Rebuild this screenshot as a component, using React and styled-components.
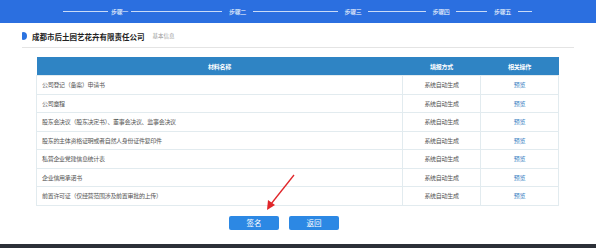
import React from "react";
import styled, { createGlobalStyle } from "styled-components";

const GlobalStyle = createGlobalStyle`
  html, body {
    margin: 0;
    padding: 0;
    background: #fff;
    font-family: "Noto Sans CJK SC", "Noto Sans", sans-serif;
  }
`;

// line widths and the gap boxes holding each label, taken from the mockup
const steps = [
  { line: 45, box: 23, label: "步骤一" },
  { line: 91, box: 31, label: "步骤二" },
  { line: 85, box: 30, label: "步骤三" },
  { line: 58, box: 30, label: "步骤四" },
  { line: 31, box: 31, label: "步骤五" },
];

const rows = [
  "公司登记（备案）申请书",
  "公司章程",
  "股东会决议（股东决定书）、董事会决议、监事会决议",
  "股东的主体资格证明或者自然人身份证件复印件",
  "私营企业党建信息统计表",
  "企业信用承诺书",
  "前置许可证（仅经营范围涉及前置审批的上传）",
];

export default function App() {
  return (
    <>
      <GlobalStyle />
      <Page>
        <StepBar>
          {steps.map((s) => (
            <React.Fragment key={s.label}>
              <Line $w={s.line} />
              <StepLabel $w={s.box}>{s.label}</StepLabel>
            </React.Fragment>
          ))}
          <Line $w={14} />
        </StepBar>

        <TitleRow>
          <Marker />
          <Company>成都市后土园艺花卉有限责任公司</Company>
          <Sub>基本信息</Sub>
        </TitleRow>
        <Divider />

        <Table>
          <thead>
            <tr>
              <Th>材料名称</Th>
              <Th $w={78}>填报方式</Th>
              <Th $w={78}>相关操作</Th>
            </tr>
          </thead>
          <tbody>
            {rows.map((r) => (
              <tr key={r}>
                <Td>{r}</Td>
                <Td $center>系统自动生成</Td>
                <Td $center>
                  <Link>预览</Link>
                </Td>
              </tr>
            ))}
          </tbody>
        </Table>

        <Buttons>
          <Button>签名</Button>
          <Button>返回</Button>
        </Buttons>

        <Footer />

        <Arrow width="40" height="42" viewBox="0 0 40 42">
          <line x1="31" y1="2" x2="8" y2="31" stroke="#e0262a" strokeWidth="1.3" />
          <polygon points="4,37 5,27 12,32" fill="#e0262a" />
        </Arrow>
      </Page>
    </>
  );
}

const Page = styled.div`
  position: relative;
  width: 596px;
  height: 248px;
  overflow: hidden;
  display: flex;
  flex-direction: column;
`;

const StepBar = styled.div`
  height: 23px;
  background: #2b6fe0;
  display: flex;
  align-items: center;
  padding-left: 63px;
`;

const Line = styled.span`
  width: ${(p) => p.$w}px;
  height: 1px;
  background: rgba(255, 255, 255, 0.75);
`;

const StepLabel = styled.span`
  width: ${(p) => p.$w}px;
  color: #fff;
  font-size: 6px;
  line-height: 1;
  letter-spacing: -0.3px;
  text-align: center;
  white-space: nowrap;
`;

const TitleRow = styled.div`
  display: flex;
  align-items: center;
  padding: 7px 0 0 22px;
  height: 12px;
`;

const Marker = styled.span`
  width: 5px;
  height: 8px;
  background: #2b73e0;
  border-radius: 1px 4px 4px 1px;
  margin-right: 5px;
`;

const Company = styled.span`
  font-size: 7.5px;
  font-weight: bold;
  color: #222;
`;

const Sub = styled.span`
  font-size: 5.5px;
  color: #999;
  margin-left: 8px;
`;

const Divider = styled.div`
  margin: 5px 22px 0 22px;
  height: 1px;
  background: #e4e4e4;
`;

const Table = styled.table`
  margin: 9px 0 0 36px;
  width: 523px;
  border-collapse: collapse;
  table-layout: fixed;
  font-size: 6px;
  letter-spacing: -0.3px;
`;

const Th = styled.th`
  width: ${(p) => (p.$w ? `${p.$w}px` : "auto")};
  height: 18px;
  padding: 0;
  background: #2f84c4;
  color: #fff;
  font-weight: bold;
  text-align: center;
`;

const Td = styled.td`
  height: 17.5px;
  padding: 0 0 0 ${(p) => (p.$center ? 0 : 5)}px;
  border: 1px solid #e2ebef;
  color: #555;
  text-align: ${(p) => (p.$center ? "center" : "left")};
  white-space: nowrap;
`;

const Link = styled.span`
  color: #3a82c4;
`;

const Buttons = styled.div`
  display: flex;
  justify-content: center;
  gap: 10px;
  margin-top: 10px;
  padding-right: 28px;
`;

const Button = styled.button`
  width: 50px;
  height: 14px;
  border: none;
  border-radius: 2px;
  background: #2c88e4;
  color: #fff;
  font-family: inherit;
  font-size: 7.5px;
  padding: 0;
`;

const Footer = styled.div`
  margin-top: auto;
  height: 4px;
  background: #2c3038;
`;

const Arrow = styled.svg`
  position: absolute;
  left: 263px;
  top: 173px;
`;
